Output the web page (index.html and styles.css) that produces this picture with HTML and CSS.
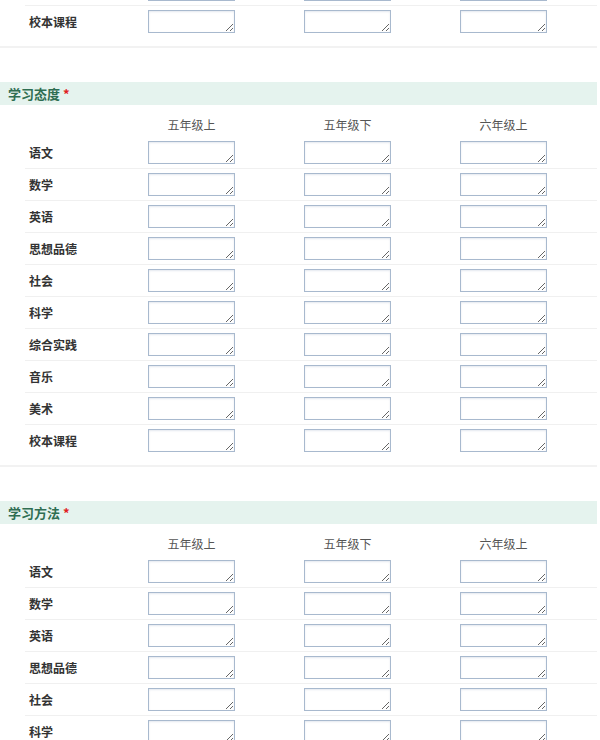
FILE: index.html
```html
<!DOCTYPE html>
<html lang="zh-CN">
<head>
<meta charset="utf-8">
<title>学习评价</title>
<link rel="stylesheet" href="styles.css">
</head>
<body>
<div class="page">
  <section class="sec sec-tail">
    <div class="grid">
      <div class="row"><div class="lbl">美术</div><textarea></textarea><textarea></textarea><textarea></textarea></div>
      <div class="row"><div class="lbl">校本课程</div><textarea></textarea><textarea></textarea><textarea></textarea></div>
    </div>
  </section>

  <section class="sec">
    <h3 class="sec-head">学习态度<span class="req">*</span></h3>
    <div class="grid">
      <div class="row head"><div class="lbl"></div><div class="col">五年级上</div><div class="col">五年级下</div><div class="col">六年级上</div></div>
      <div class="row"><div class="lbl">语文</div><textarea></textarea><textarea></textarea><textarea></textarea></div>
      <div class="row"><div class="lbl">数学</div><textarea></textarea><textarea></textarea><textarea></textarea></div>
      <div class="row"><div class="lbl">英语</div><textarea></textarea><textarea></textarea><textarea></textarea></div>
      <div class="row"><div class="lbl">思想品德</div><textarea></textarea><textarea></textarea><textarea></textarea></div>
      <div class="row"><div class="lbl">社会</div><textarea></textarea><textarea></textarea><textarea></textarea></div>
      <div class="row"><div class="lbl">科学</div><textarea></textarea><textarea></textarea><textarea></textarea></div>
      <div class="row"><div class="lbl">综合实践</div><textarea></textarea><textarea></textarea><textarea></textarea></div>
      <div class="row"><div class="lbl">音乐</div><textarea></textarea><textarea></textarea><textarea></textarea></div>
      <div class="row"><div class="lbl">美术</div><textarea></textarea><textarea></textarea><textarea></textarea></div>
      <div class="row"><div class="lbl">校本课程</div><textarea></textarea><textarea></textarea><textarea></textarea></div>
    </div>
  </section>

  <section class="sec">
    <h3 class="sec-head">学习方法<span class="req">*</span></h3>
    <div class="grid">
      <div class="row head"><div class="lbl"></div><div class="col">五年级上</div><div class="col">五年级下</div><div class="col">六年级上</div></div>
      <div class="row"><div class="lbl">语文</div><textarea></textarea><textarea></textarea><textarea></textarea></div>
      <div class="row"><div class="lbl">数学</div><textarea></textarea><textarea></textarea><textarea></textarea></div>
      <div class="row"><div class="lbl">英语</div><textarea></textarea><textarea></textarea><textarea></textarea></div>
      <div class="row"><div class="lbl">思想品德</div><textarea></textarea><textarea></textarea><textarea></textarea></div>
      <div class="row"><div class="lbl">社会</div><textarea></textarea><textarea></textarea><textarea></textarea></div>
      <div class="row"><div class="lbl">科学</div><textarea></textarea><textarea></textarea><textarea></textarea></div>
      <div class="row"><div class="lbl">综合实践</div><textarea></textarea><textarea></textarea><textarea></textarea></div>
      <div class="row"><div class="lbl">音乐</div><textarea></textarea><textarea></textarea><textarea></textarea></div>
    </div>
  </section>
</div>
</body>
</html>
```
FILE: styles.css
```css
html, body {
  margin: 0;
  padding: 0;
  background: #fff;
}
body {
  font-family: "Noto Sans CJK SC", "Microsoft YaHei", sans-serif;
  font-size: 12px;
  color: #333;
  overflow: hidden;
}
.page {
  width: 597px;
  margin-top: -26px;
}
.sec {
  padding-bottom: 9px;
  border-bottom: 2px solid #f2f2f2;
  margin-bottom: 34px;
}
.sec-head {
  margin: 0;
  height: 23px;
  line-height: 23px;
  padding-left: 8px;
  background: #e5f3ee;
  color: #2f6e52;
  font-size: 13px;
  font-weight: bold;
}
.req {
  color: #e02020;
  margin-left: 3px;
}
.grid {
  margin-left: 25px;
}
.row {
  display: grid;
  grid-template-columns: 123px 156px 156px 1fr;
  align-items: center;
  padding: 4px 0;
  height: 23px;
  border-bottom: 1px solid #f0f0f0;
}
.row:last-child {
  border-bottom: 0;
}
.row.head {
  height: 20px;
  padding: 10px 0 2px;
  border-bottom: 0;
}
.lbl {
  padding-left: 4px;
  font-weight: bold;
  color: #333;
  font-size: 12px;
}
.col {
  width: 87px;
  text-align: center;
  color: #555;
  font-size: 12px;
  line-height: 20px;
}
textarea {
  display: block;
  box-sizing: border-box;
  width: 87px;
  height: 23px;
  margin: 0;
  padding: 2px;
  border: 1px solid #a8b9ce;
  box-shadow: inset 0 1px 2px rgba(120, 140, 170, 0.2);
  background: #fff;
  font-family: inherit;
  font-size: 12px;
}
```
